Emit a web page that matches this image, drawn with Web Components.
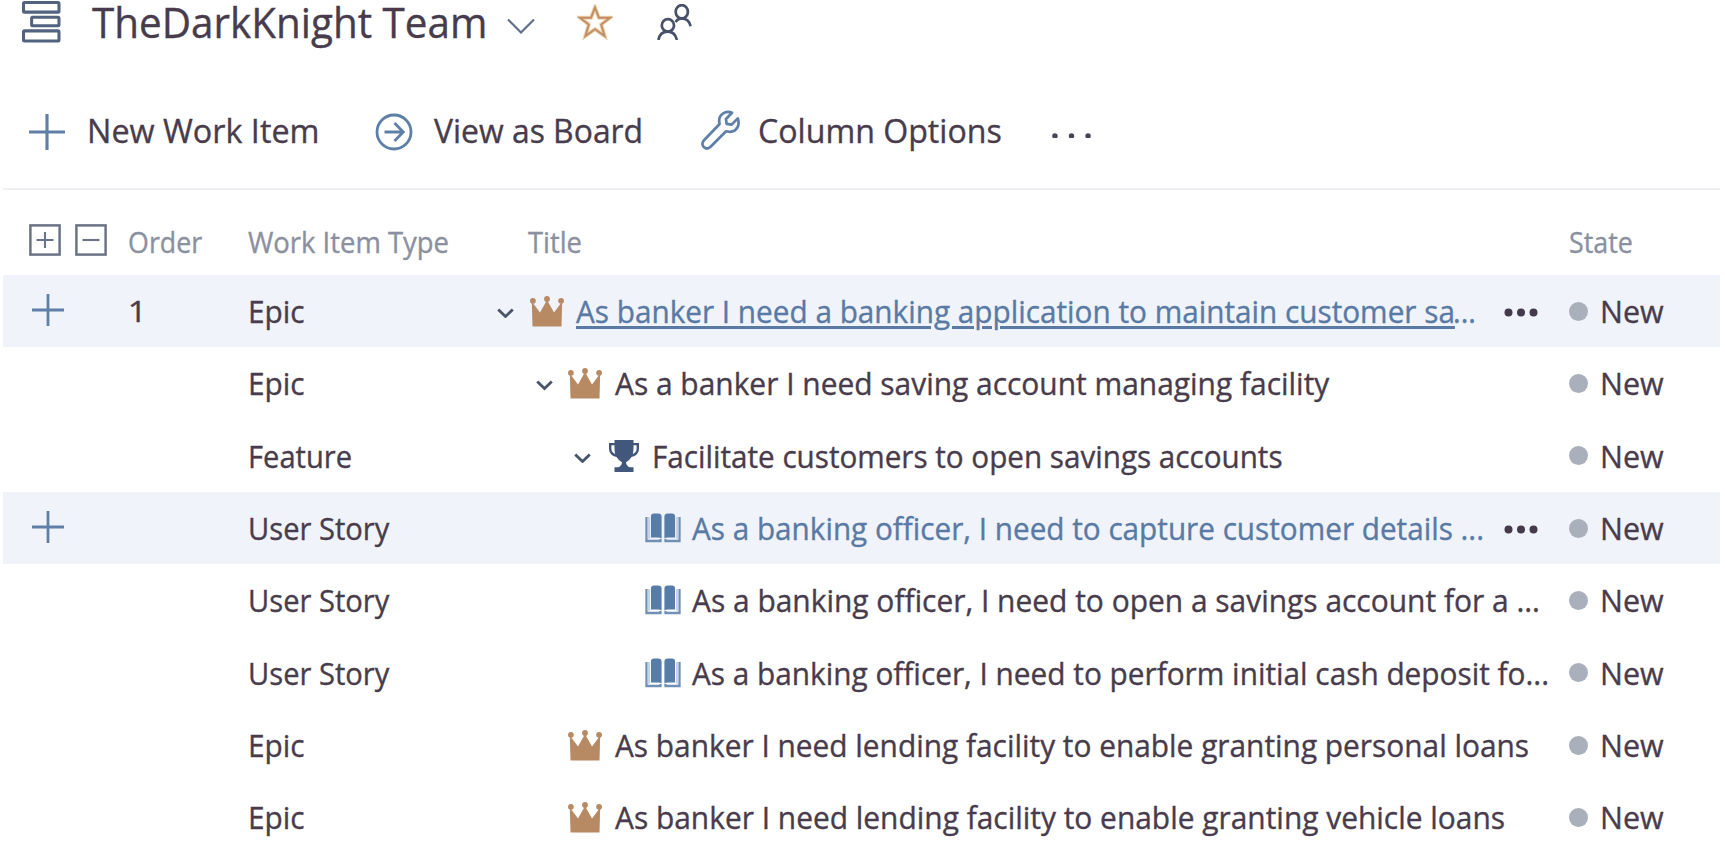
<!DOCTYPE html>
<html lang="en">
<head>
<meta charset="utf-8">
<title>TheDarkKnight Team</title>
<style>
body{margin:0;background:#fff;overflow:hidden;font-family:"Open Sans","Noto Sans",sans-serif;color:#483c4c}
</style>
</head>
<body>
<backlog-page></backlog-page>
<script>
const ICONS={
stack:['0 0 38 42','<g fill="none" stroke="#51637f" stroke-width="3"><rect x="1.5" y="1.5" width="35" height="9.5" rx="1"/><rect x="9.5" y="16" width="27" height="8.5" rx="1"/><rect x="1.5" y="29.5" width="35" height="10" rx="1"/></g>'],
down:['0 0 28 16','<path d="M1 1.5 14 14.5 27 1.5" fill="none" stroke="#60708a" stroke-width="2.2"/>'],
star:['0 0 36 36','<path d="M18 3.5 21.9 13.7H33L24.2 20.5 27.6 32 18 25.2 8.4 32 11.8 20.5 3 13.7H14.1Z" fill="none" stroke="#efd3b1" stroke-width="4"/><path d="M18 3.5 21.9 13.7H33L24.2 20.5 27.6 32 18 25.2 8.4 32 11.8 20.5 3 13.7H14.1Z" fill="none" stroke="#c18f65" stroke-width="2"/>'],
people:['0 0 36 38','<g fill="none" stroke="#485169" stroke-width="2.8"><ellipse cx="25.5" cy="8" rx="6.3" ry="6.8"/><path d="M19 18.5Q22 14.6 25.5 14.8 33 15 34.5 23"/><ellipse cx="11.2" cy="22" rx="6.3" ry="6.4"/><path d="M1.5 37Q3 28.5 11 28.5 18.5 28.5 20.5 37"/></g>'],
plus:['0 0 36 36','<path d="M0 18H36M18 0V36" stroke="#5e7fa8" stroke-width="3.1"/>'],
go:['0 0 38 38','<g fill="none" stroke="#5e7fa8" stroke-width="2.8"><circle cx="19" cy="19" r="17"/><path d="M9.5 19H28M19.5 10 28.3 19 19.5 28"/></g>'],
wrench:['0 0 40 40','<path d="M36.8 8.4 30.6 14.6 25.6 13.8 25 9 31 2.8C25 0 17.8 4.3 18.2 11.3 18.3 12.8 18.8 13.8 18.4 14.3L3 30.2C.8 32.4 1 35.2 2.8 37 4.8 38.9 7.4 38.9 9.6 36.8L24.8 21.5C25.6 21 26.8 21.8 29 21.8 35.8 21.6 39.2 15 36.8 8.4Z" fill="none" stroke="#5e7fa8" stroke-width="2.7" stroke-linejoin="round"/>'],
expand:['0 0 32 32','<rect x="1.4" y="1.4" width="29.2" height="29.2" fill="none" stroke="#6b7486" stroke-width="2.5"/><path d="M7.5 16H24.5M16 8V24" stroke="#6b7486" stroke-width="2.1"/>'],
collapse:['0 0 32 32','<rect x="1.4" y="1.4" width="29.2" height="29.2" fill="none" stroke="#6b7486" stroke-width="2.5"/><path d="M7.5 16H24.5" stroke="#6b7486" stroke-width="2.1"/>'],
chev:['0 0 18 11','<path d="M1.3 1.5 9 9 16.7 1.5" fill="none" stroke="#48546c" stroke-width="3"/>'],
crown:['0 0 34 31','<g fill="#b78a63"><path d="M1.8 5.5 10 16.5 17 4 24 16.5 32.2 5.5 31.5 30.5H2.5Z"/><circle cx="2.9" cy="4.8" r="2.9"/><circle cx="17" cy="3" r="2.9"/><circle cx="31.1" cy="4.8" r="2.9"/></g>'],
trophy:['0 0 30 32','<g fill="#42577c"><path d="M5.5 0H24.5V3H30V8.5C30 13.5 26.8 16 22.5 17 20.8 19.8 18.8 21 17 22.2 17.2 24.5 18.5 26.3 20.5 27.3H24.5V32H5.5V27.3H9.5C11.5 26.3 12.8 24.5 13 22.2 11.2 21 9.2 19.8 7.5 17 3.2 16 0 13.5 0 8.5V3H5.5ZM5.5 5.2H2.4V8.6C2.4 11.4 3.8 13 6.2 14 5.5 11 5.4 8 5.5 5.2ZM24.5 5.2C24.6 8 24.5 11 23.8 14 26.2 13 27.6 11.4 27.6 8.6V5.2Z" fill-rule="evenodd"/></g>'],
book:['0 0 36 30','<g fill="#587ca8"><path d="M6 3Q6 .5 9 .5H13Q16.6.5 16.6 3.8V25.5Q15.5 24.5 13 24.5H6ZM30 3Q30 .5 27 .5H23Q19.4.5 19.4 3.8V25.5Q20.5 24.5 23 24.5H30Z"/></g><path d="M1.5 4V28H15.5V26M34.5 4V28H20.5V26" fill="none" stroke="#6f8fb6" stroke-width="2.3"/><path d="M3.9 4V25.8M32.1 4V25.8" stroke="#c3d3e8" stroke-width="2.6"/>'],
dots:['0 0 40 6','<g fill="#4a4356"><circle cx="3" cy="3" r="2.8"/><circle cx="20" cy="3" r="2.8"/><circle cx="37" cy="3" r="2.8"/></g>'],
more:['0 0 34 9','<g fill="#443a4c"><circle cx="4.5" cy="4.5" r="4"/><circle cx="17" cy="4.5" r="4"/><circle cx="29.5" cy="4.5" r="4"/></g>']
};
const icon=(n,w,s='')=>`<ui-icon name="${n}" w="${w}" style="${s}"></ui-icon>`;
const text=(t,w,s,c='')=>`<fit-text w="${w}" size="${s}" ${c}>${t}</fit-text>`;

class UiIcon extends HTMLElement{
  connectedCallback(){
    const [vb,body]=ICONS[this.getAttribute('name')];
    this.attachShadow({mode:'open'}).innerHTML=`<style>:host{display:block;flex:none;width:${this.getAttribute('w')}px}svg{display:block;width:100%}</style><svg viewBox="${vb}">${body}</svg>`;
  }
}
customElements.define('ui-icon',UiIcon);

/* One line of text condensed or widened to an exact ink width. */
const ctx=document.createElement('canvas').getContext('2d');
class FitText extends HTMLElement{
  connectedCallback(){
    const w=+this.getAttribute('w'),s=+this.getAttribute('size');
    ctx.font=`${s}px "Open Sans"`;
    const m=ctx.measureText(this.textContent);
    const k=w/(m.actualBoundingBoxLeft+m.actualBoundingBoxRight);
    const link=this.hasAttribute('link');
    this.attachShadow({mode:'open'}).innerHTML=`<style>
      :host{display:block;flex:none;width:${w}px;height:${s}px;font-size:${s}px;line-height:${s}px;white-space:pre;-webkit-text-stroke:.35px currentColor}
      span{display:inline-block;transform-origin:0 0;transform:translateX(${m.actualBoundingBoxLeft*k}px) scaleX(${k});
      ${link?'text-decoration:underline;text-decoration-thickness:2.6px;text-underline-offset:3px':''}}
      </style><span><slot></slot></span>`;
  }
}
customElements.define('fit-text',FitText);

class TeamHeader extends HTMLElement{
  connectedCallback(){
    this.attachShadow({mode:'open'}).innerHTML=`<style>
      :host{display:flex;align-items:center;height:44px;padding-left:22px;box-sizing:border-box}</style>
      ${icon('stack',38.5,'margin-top:1px')}${text('TheDarkKnight Team',393,41.5,'style="margin:2px 0 0 31.5px"')}
      ${icon('down',28,'margin:8px 0 0 22px')}${icon('star',36,'margin-left:42px')}${icon('people',35,'margin-left:44px')}`;
  }
}
customElements.define('team-header',TeamHeader);

class ActionBar extends HTMLElement{
  connectedCallback(){
    this.attachShadow({mode:'open'}).innerHTML=`<style>
      :host{display:flex;align-items:center;height:144px;box-sizing:border-box;padding:32px 0 0 29px;margin:0 5px 0 0}
      fit-text{margin-top:-3px}</style>
      ${icon('plus',36)}${text('New Work Item',227,33,'style="margin-left:24.5px"')}
      ${icon('go',38,'margin-left:58.5px')}${text('View as Board',207,33,'style="margin-left:21px"')}
      ${icon('wrench',40,'margin:-4px 0 0 60px')}${text('Column Options',241,33,'style="margin-left:19px"')}
      ${icon('dots',39,'margin:7px 0 0 51px')}`;
  }
}
customElements.define('action-bar',ActionBar);

const GRID='display:grid;grid-template-columns:125px 120px 249px 1071px 1fr;align-items:center;margin:0 5px 0 3px;';
class GridHead extends HTMLElement{
  connectedCallback(){
    this.attachShadow({mode:'open'}).innerHTML=`<style>
      :host{${GRID}height:84px;box-sizing:border-box;border-top:2px solid #eff0f3;color:#8b90a0;padding-top:22px}
      .b{display:flex;gap:14px;padding-left:25.5px;margin-top:-4px}</style>
      <div class="b">${icon('expand',32)}${icon('collapse',32)}</div>
      ${text('Order',73.5,28.5,'style="margin-left:.5px"')}${text('Work Item Type',200,28.5)}${text('Title',53,28.5,'style="margin-left:31px"')}${text('State',62,28.5,'style="margin-left:1.5px"')}`;
  }
}
customElements.define('grid-head',GridHead);

class WorkItem extends HTMLElement{
  connectedCallback(){
    const d=this.data;
    this.attachShadow({mode:'open'}).innerHTML=`<style>
      :host{${GRID}height:72.33px;background:${d.hot?'#f0f3f9':'#fff'}}
      .t{display:flex;align-items:center;padding-left:${d.level*38.7}px}
      .c{width:17px;flex:none;margin-right:14.5px}
      .i{width:36px;flex:none;display:flex;justify-content:center;margin-right:11.5px}
      .s{display:flex;align-items:center;gap:14px}
      .dot{width:19px;height:19px;border-radius:50%;background:#a9afbb;margin-left:.5px}
      .l{color:#587aa5}</style>
      <div>${d.hot?icon('plus',32,'margin:-3px 0 0 28.5px'):''}</div>
      <div>${d.order?text(d.order,10,30,'style="margin-left:2px"'):''}</div>
      <div>${text(d.type,d.tw,30.5,'style="margin-left:2px"')}</div>
      <div class="t"><div class="c">${d.open?icon('chev',17,'margin-top:4px'):''}</div>
      <div class="i">${icon(d.icon,d.icon=='crown'?34:d.icon=='book'?36:30)}</div>
      <div class="${d.hot?'l':''}">${text(d.title,d.w,30.5,(d.link?'link ':'')+(d.icon=='trophy'?'style="margin-left:1px"':''))}</div>
      ${d.link?text('...',19,30.5,'class="l" style="margin-left:2px"'):''}
      ${d.hot?icon('more',34,'margin:2px 30px 0 auto'):''}</div>
      <div class="s"><div class="dot"></div>${text('New',62,30.5)}</div>`;
  }
}
customElements.define('work-item',WorkItem);

const ITEMS=[
{order:'1',type:'Epic',tw:54,level:0,open:1,icon:'crown',title:'As banker I need a banking application to maintain customer sa',w:877,hot:1,link:1},
{type:'Epic',tw:54,level:1,open:1,icon:'crown',title:'As a banker I need saving account managing facility',w:715},
{type:'Feature',tw:101,level:2,open:1,icon:'trophy',title:'Facilitate customers to open savings accounts',w:628},
{type:'User Story',tw:140,level:3,icon:'book',title:'As a banking officer, I need to capture customer details ...',w:790,hot:1},
{type:'User Story',tw:140,level:3,icon:'book',title:'As a banking officer, I need to open a savings account for a ...',w:846},
{type:'User Story',tw:140,level:3,icon:'book',title:'As a banking officer, I need to perform initial cash deposit fo...',w:855},
{type:'Epic',tw:54,level:1,icon:'crown',title:'As banker I need lending facility to enable granting personal loans',w:913.5},
{type:'Epic',tw:54,level:1,icon:'crown',title:'As banker I need lending facility to enable granting vehicle loans',w:889.5}];

class BacklogPage extends HTMLElement{
  connectedCallback(){
    const r=this.attachShadow({mode:'open'});
    r.innerHTML=`<style>:host{display:block;width:1725px;height:841px;overflow:hidden}</style>
      <team-header></team-header><action-bar></action-bar><grid-head></grid-head>`;
    r.querySelector('grid-head').style.marginBottom='3px';
    for(const d of ITEMS){const e=document.createElement('work-item');e.data=d;r.append(e)}
  }
}
customElements.define('backlog-page',BacklogPage);
</script>
</body>
</html>
